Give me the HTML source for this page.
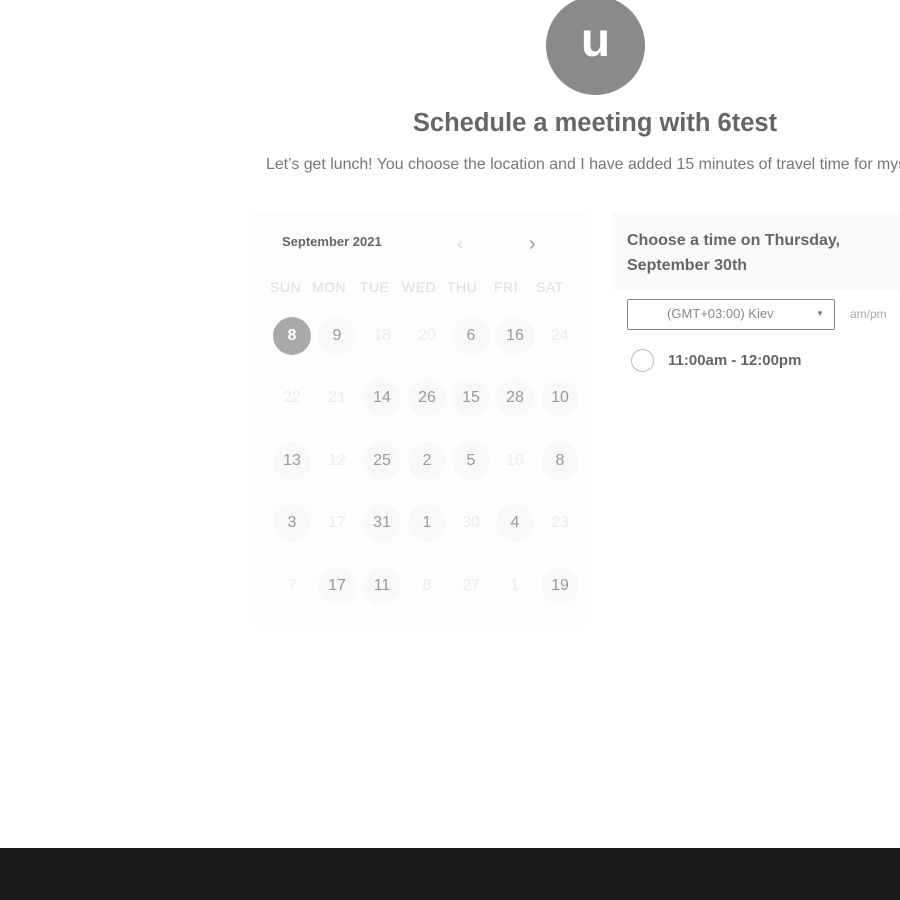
<!DOCTYPE html>
<html><head><style>
body{margin:0;width:900px;height:900px;overflow:hidden;background:#fff;font-family:"Liberation Sans",sans-serif;position:relative}
.a{position:absolute}
.av{left:546px;top:-4px;width:99px;height:99px;border-radius:50%;background:#8a8a8a;color:#fff;font-size:48px;font-weight:bold;text-align:center;line-height:90px}
h1{position:absolute;left:0;width:1190px;top:109px;margin:0;text-align:center;font-size:25.5px;color:#666;font-weight:bold}
.sub{left:266px;top:156px;font-size:15.9px;color:#777;white-space:nowrap}
.cal{left:254px;top:212px;width:332px;height:414px;background:#fdfdfd}
.d{position:absolute;width:38px;height:38px;border-radius:50%;background:#f8f8f8;text-align:center;line-height:38px;font-size:16px;color:#999}
.l{background:transparent;color:#ececec}
.sel{background:#a9a9a9;color:#fff;font-weight:bold}
.wk{top:279px;font-size:14px;color:#ddd;letter-spacing:0.5px}
</style></head><body>
<div class="a av">u</div>
<h1>Schedule a meeting with 6test</h1>
<div class="a sub">Let’s get lunch! You choose the location and I have added 15 minutes of travel time for myself.</div>
<div class="a cal"></div>
<div class="a" style="left:282px;top:234px;font-size:13px;color:#666;font-weight:bold">September 2021</div>
<div class="a" style="left:457px;top:234px;font-size:18px;color:#ddd">‹</div>
<div class="a" style="left:529px;top:233px;font-size:20px;color:#999">›</div>
<div class="a wk" style="left:270px">SUN</div><div class="a wk" style="left:312px">MON</div><div class="a wk" style="left:360px">TUE</div><div class="a wk" style="left:402px">WED</div><div class="a wk" style="left:447px">THU</div><div class="a wk" style="left:494px">FRI</div><div class="a wk" style="left:536px">SAT</div>
<div id="g"></div>
<script>
var cx=[292,337,382,427,471,515,560],cy=[336,398,461,523,586];
var r=[["8s","9","18l","20l","6","16","24l"],["22l","21l","14","26","15","28","10"],["13","12l","25","2","5","16l","8"],["3","17l","31","1","30l","4","23l"],["7l","17","11","8l","27l","1l","19"]];
var h="";r.forEach(function(row,i){row.forEach(function(v,j){var c="d";if(v.slice(-1)=="s")c+=" sel";if(v.slice(-1)=="l")c+=" l";h+='<div class="'+c+'" style="left:'+(cx[j]-19)+'px;top:'+(cy[i]-19)+'px">'+parseInt(v)+'</div>';});});
document.getElementById("g").innerHTML=h;
</script>
<div class="a" style="left:612px;top:212px;width:288px;height:78px;background:#fafafa"></div>
<div class="a" style="left:627px;top:228px;font-size:16px;line-height:25px;color:#666;font-weight:bold">Choose a time on Thursday,<br>September 30th</div>
<div class="a" style="left:627px;top:299px;width:206px;height:29px;border:1px solid #888;border-radius:2px"></div>
<div class="a" style="left:667px;top:306px;font-size:13px;color:#888">(GMT+03:00) Kiev</div>
<div class="a" style="left:816px;top:309px;font-size:8px;color:#777">▼</div>
<div class="a" style="left:850px;top:307px;font-size:12px;color:#aaa">am/pm</div>
<div class="a" style="left:631px;top:349px;width:21px;height:21px;border:1px solid #bbb;border-radius:50%"></div>
<div class="a" style="left:668px;top:352px;font-size:15px;color:#666;font-weight:bold">11:00am - 12:00pm</div>
<div class="a" style="left:0;top:848px;width:900px;height:52px;background:#1b1b1b"></div>
</body></html>
